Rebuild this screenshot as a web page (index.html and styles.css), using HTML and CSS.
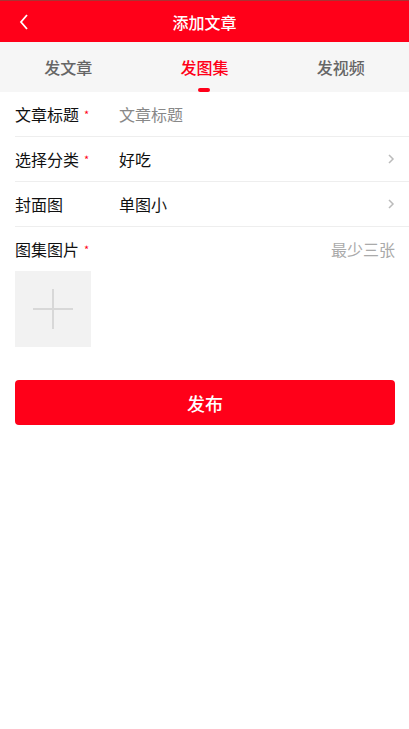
FILE: index.html
```html
<!DOCTYPE html>
<html lang="zh-CN">
<head>
    <meta charset="UTF-8">
    <meta name="viewport" content="width=device-width, initial-scale=1.0">
    <title>添加文章</title>
    <link rel="stylesheet" href="styles.css">
</head>
<body>
    <div class="header">
        <span class="back">
            <svg width="10" height="16" viewBox="0 0 10 16"><path d="M8 1 L2 8 L8 15" fill="none" stroke="#fff" stroke-width="1.8"/></svg>
        </span>
        <h1>添加文章</h1>
    </div>

    <div class="tabs">
        <div class="tab">发文章</div>
        <div class="tab active">发图集</div>
        <div class="tab">发视频</div>
    </div>

    <div class="form">
        <div class="row">
            <label>文章标题<i>*</i></label>
            <span class="value placeholder">文章标题</span>
        </div>
        <div class="row">
            <label>选择分类<i>*</i></label>
            <span class="value">好吃</span>
            <span class="arrow"><svg width="8" height="12" viewBox="0 0 8 12"><path d="M2 2 L6 6 L2 10" fill="none" stroke="#bbb" stroke-width="1.5"/></svg></span>
        </div>
        <div class="row">
            <label>封面图</label>
            <span class="value">单图小</span>
            <span class="arrow"><svg width="8" height="12" viewBox="0 0 8 12"><path d="M2 2 L6 6 L2 10" fill="none" stroke="#bbb" stroke-width="1.5"/></svg></span>
        </div>
        <div class="row plain">
            <label>图集图片<i>*</i></label>
            <span class="hint">最少三张</span>
        </div>
        <div class="upload">
            <div class="plus"></div>
        </div>
    </div>

    <button class="submit">发布</button>
</body>
</html>
```

FILE: styles.css
```css
body {
    margin: 0;
    background: #fff;
    font-family: "Noto Sans CJK SC", "Noto Sans", sans-serif;
    color: #222;
}
.header {
    height: 41px;
    background: #ff0019;
    border-top: 1px solid #a33;
    display: flex;
    align-items: center;
    justify-content: center;
    position: relative;
}
.header h1 {
    margin: 0;
    font-size: 16px;
    font-weight: 500;
    color: #fff;
}
.back {
    position: absolute;
    left: 19px;
    top: 13px;
    display: flex;
}
.tabs {
    height: 50px;
    background: #f6f6f6;
    display: flex;
}
.tab {
    flex: 1;
    display: flex;
    justify-content: center;
    padding-top: 13px;
    font-size: 16px;
    font-weight: 500;
    color: #666;
    position: relative;
}
.tab.active {
    color: #ff0019;
}
.tab.active::after {
    content: "";
    position: absolute;
    left: 50%;
    bottom: 0;
    width: 12px;
    height: 4px;
    margin-left: -6px;
    border-radius: 2px;
    background: #ff0019;
}
.form {
    padding-left: 15px;
}
.row {
    height: 44px;
    display: flex;
    align-items: center;
    border-bottom: 1px solid #eee;
    padding-right: 14px;
    font-size: 16px;
}
.row.plain {
    border-bottom: none;
    padding-right: 14px;
}
.row label {
    width: 104px;
    color: #111;
}
.row label i {
    font-style: normal;
    color: #ff0019;
    font-size: 11px;
    margin-left: 5px;
    vertical-align: 2px;
}
.value {
    flex: 1;
    color: #111;
}
.placeholder {
    color: #888;
}
.arrow {
    display: flex;
}
.hint {
    margin-left: auto;
    color: #aaa;
}
.upload {
    width: 76px;
    height: 76px;
    background: #f2f2f2;
    position: relative;
}
.plus::before,
.plus::after {
    content: "";
    position: absolute;
    background: #d8d8d8;
}
.plus::before {
    left: 18px;
    top: 37px;
    width: 40px;
    height: 2px;
}
.plus::after {
    left: 37px;
    top: 18px;
    width: 2px;
    height: 40px;
}
.submit {
    display: block;
    width: 380px;
    height: 45px;
    margin: 33px 0 0 15px;
    border: none;
    border-radius: 4px;
    background: #ff0019;
    color: #fff;
    font-family: inherit;
    font-size: 18px;
    font-weight: 500;
}
```
